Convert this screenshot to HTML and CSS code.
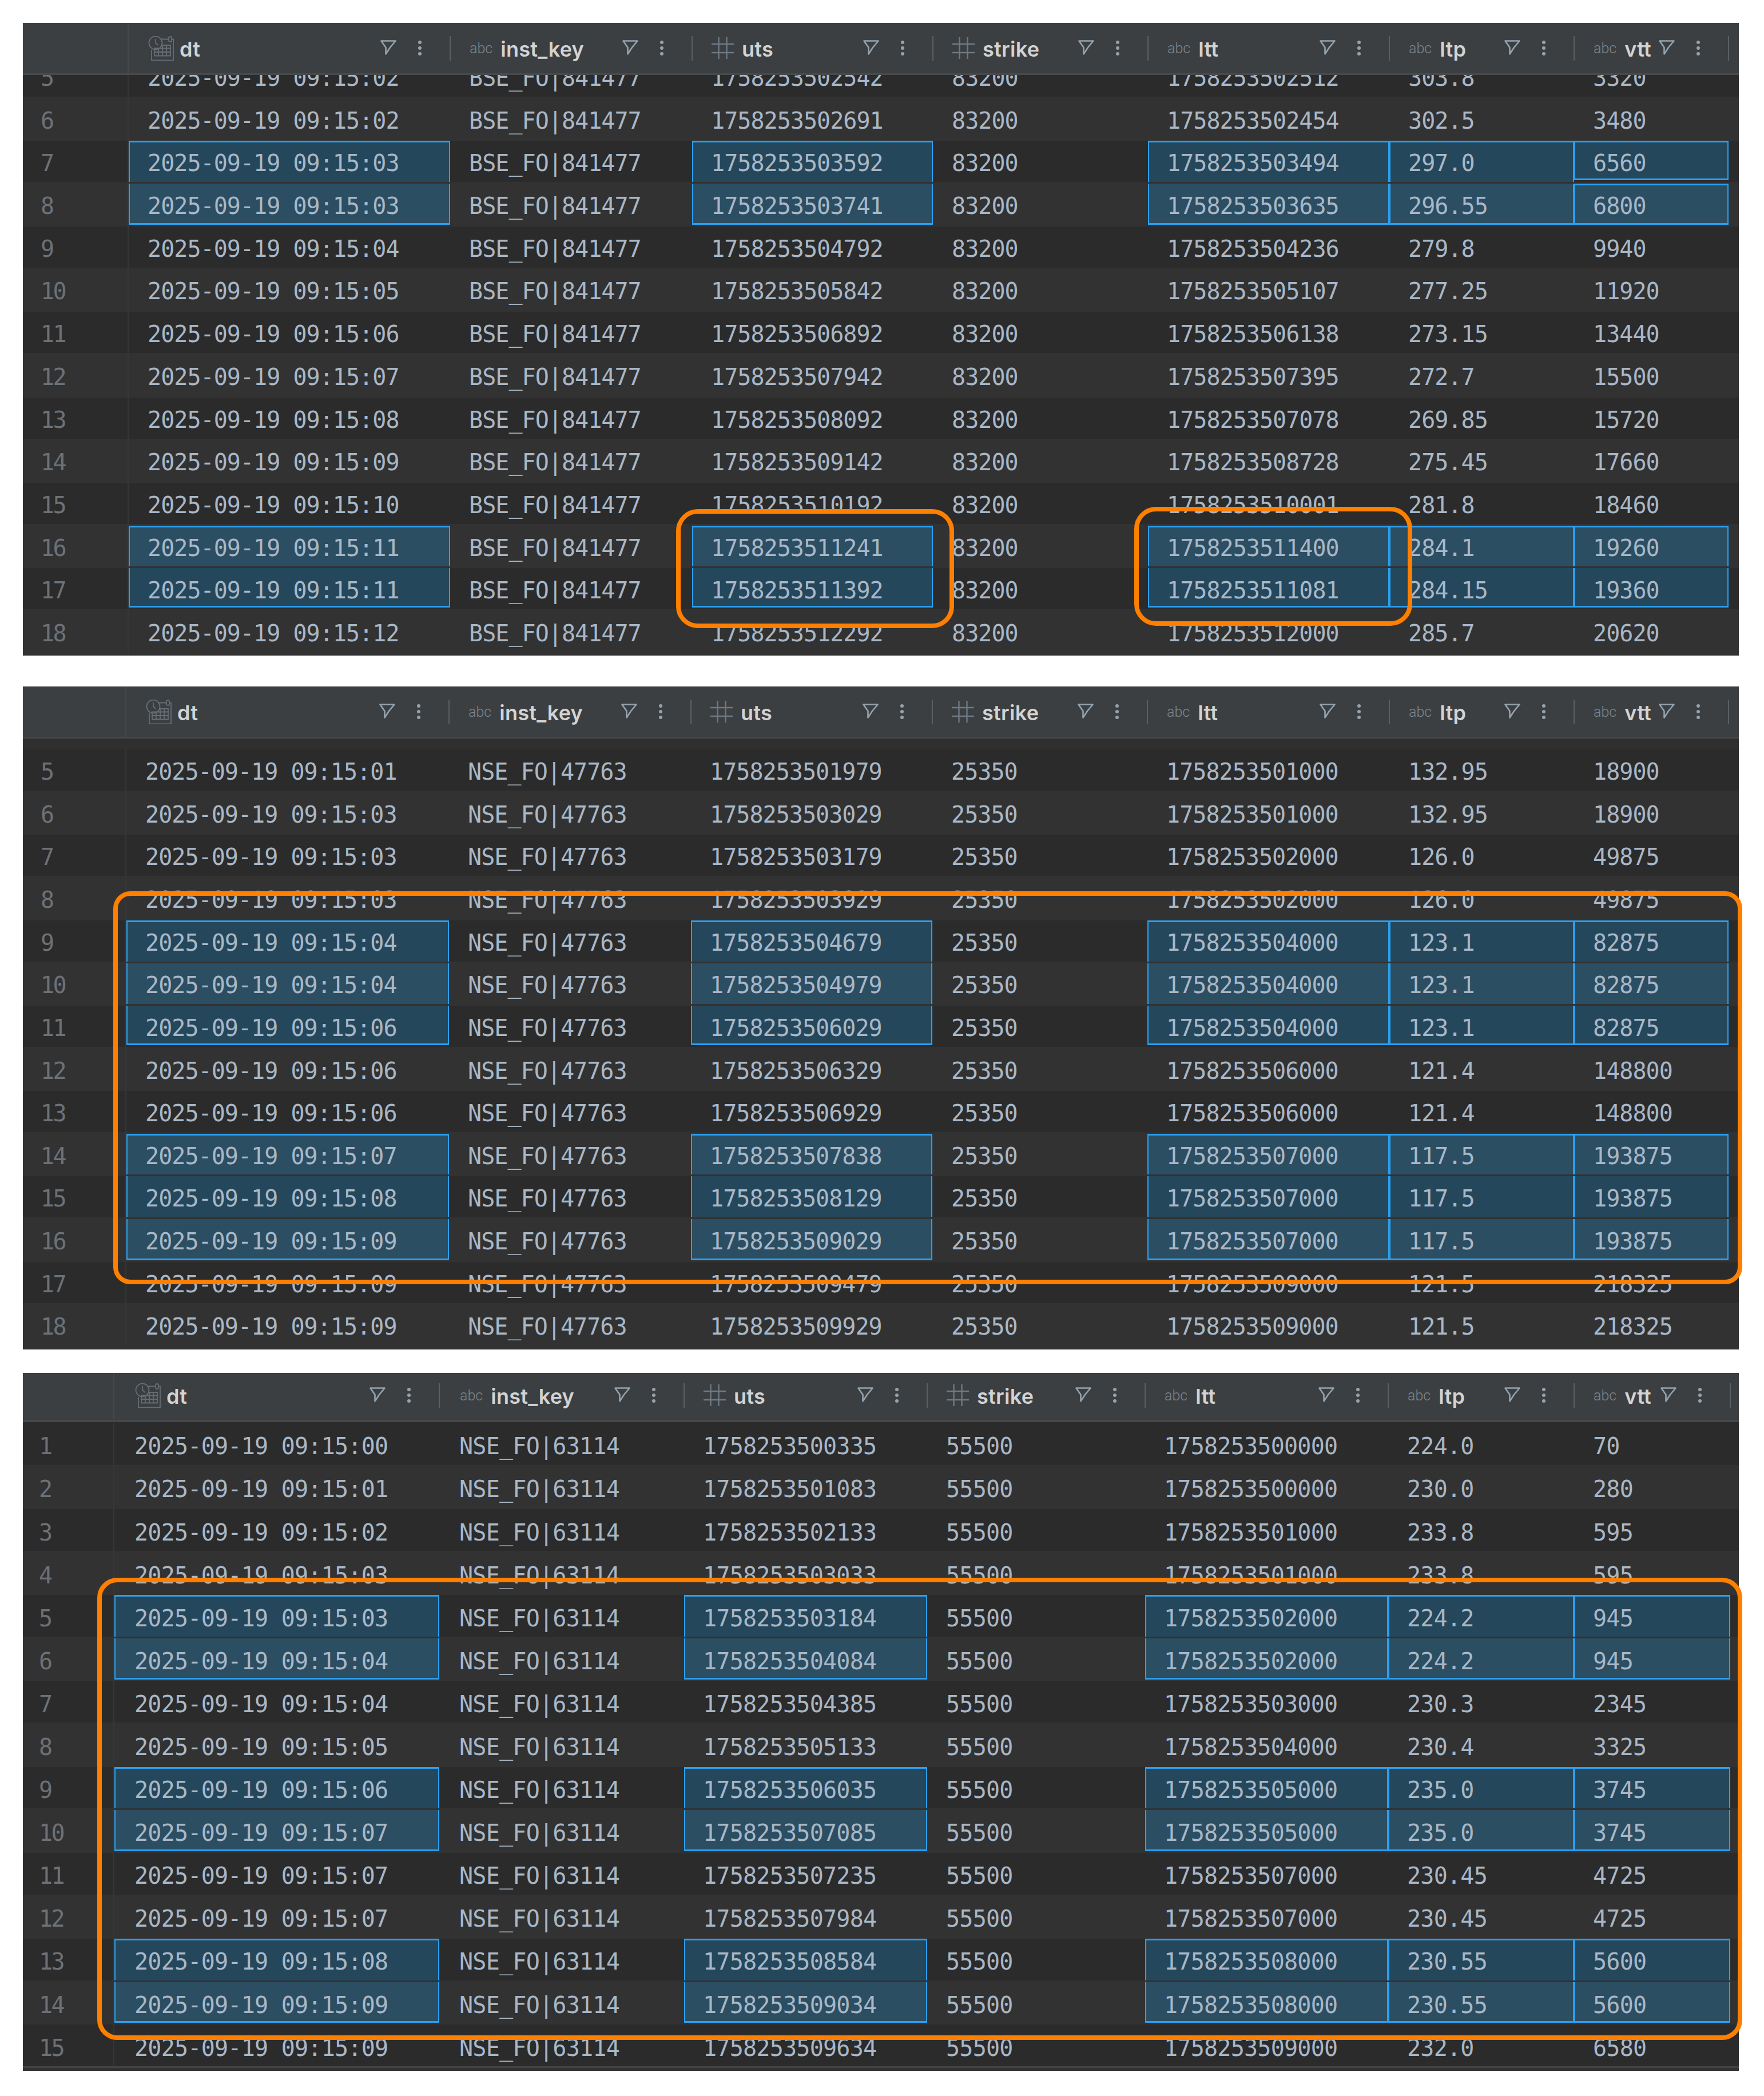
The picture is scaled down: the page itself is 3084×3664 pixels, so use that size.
FILE: index.html
```html
<!DOCTYPE html>
<html lang="en">
<head>
<meta charset="utf-8">
<title>Tick data</title>
<link rel="stylesheet" href="styles.css">
</head>
<body>
<svg class="defs" width="0" height="0" aria-hidden="true">
  <symbol id="i-cal" viewBox="0 0 45 43">
    <path class="st" d="M22 5.500h14M41 5.500h3v37H6V24"/>
    <rect class="st" x="36" y="1" width="5" height="9" rx="2.500"/>
    <path class="st" d="M11 21.500h28v13H11zM11 28h28M18 22v12M25 16v18M32 16v18M25 16h14v6"/>
    <circle class="st" cx="13" cy="12" r="11.500"/>
    <path class="st" d="M13 5v7l4.500 4"/>
  </symbol>
  <symbol id="i-hash" viewBox="0 0 39 38">
    <path class="st hs" d="M12.500 0v38M26.500 0v38M0 12h39M0 27h39"/>
  </symbol>
  <symbol id="i-filter" viewBox="0 0 28 26">
    <path class="fl" d="M1.500 1.500h25L17 13l-7.500 11.500V13z"/>
  </symbol>
  <symbol id="i-kebab" viewBox="0 0 6 26">
    <circle cx="3" cy="3" r="3"/><circle cx="3" cy="13" r="3"/><circle cx="3" cy="23" r="3"/>
  </symbol>
</svg>

<main class="page">

<section class="panel p1">
  <div class="table">
    <header class="head">
      <div class="hnum"></div>
      <div class="h"><svg class="ic cal"><use href="#i-cal"/></svg><span class="lb">dt</span><svg class="fi"><use href="#i-filter"/></svg><svg class="ke"><use href="#i-kebab"/></svg></div>
      <div class="h"><span class="abc">abc</span><span class="lb">inst_key</span><svg class="fi"><use href="#i-filter"/></svg><svg class="ke"><use href="#i-kebab"/></svg></div>
      <div class="h"><svg class="ic hash"><use href="#i-hash"/></svg><span class="lb">uts</span><svg class="fi"><use href="#i-filter"/></svg><svg class="ke"><use href="#i-kebab"/></svg></div>
      <div class="h"><svg class="ic hash"><use href="#i-hash"/></svg><span class="lb">strike</span><svg class="fi"><use href="#i-filter"/></svg><svg class="ke"><use href="#i-kebab"/></svg></div>
      <div class="h"><span class="abc">abc</span><span class="lb">ltt</span><svg class="fi"><use href="#i-filter"/></svg><svg class="ke"><use href="#i-kebab"/></svg></div>
      <div class="h"><span class="abc">abc</span><span class="lb">ltp</span><svg class="fi"><use href="#i-filter"/></svg><svg class="ke"><use href="#i-kebab"/></svg></div>
      <div class="h"><span class="abc">abc</span><span class="lb">vtt</span><svg class="fi"><use href="#i-filter"/></svg><svg class="ke"><use href="#i-kebab"/></svg></div>
    </header>
    <div class="rows">
      <div class="row dark"><div class="num">5</div><div>2025-09-19 09:15:02</div><div>BSE_FO|841477</div><div>1758253502542</div><div>83200</div><div>1758253502512</div><div>303.8</div><div>3320</div></div>
      <div class="row light"><div class="num">6</div><div>2025-09-19 09:15:02</div><div>BSE_FO|841477</div><div>1758253502691</div><div>83200</div><div>1758253502454</div><div>302.5</div><div>3480</div></div>
      <div class="row dark"><div class="num">7</div><div class="sel top">2025-09-19 09:15:03</div><div>BSE_FO|841477</div><div class="sel top">1758253503592</div><div>83200</div><div class="sel top">1758253503494</div><div class="sel top">297.0</div><div class="sel top bot">6560</div></div>
      <div class="row light"><div class="num">8</div><div class="sel bot">2025-09-19 09:15:03</div><div>BSE_FO|841477</div><div class="sel bot">1758253503741</div><div>83200</div><div class="sel bot">1758253503635</div><div class="sel bot">296.55</div><div class="sel top bot">6800</div></div>
      <div class="row dark"><div class="num">9</div><div>2025-09-19 09:15:04</div><div>BSE_FO|841477</div><div>1758253504792</div><div>83200</div><div>1758253504236</div><div>279.8</div><div>9940</div></div>
      <div class="row light"><div class="num">10</div><div>2025-09-19 09:15:05</div><div>BSE_FO|841477</div><div>1758253505842</div><div>83200</div><div>1758253505107</div><div>277.25</div><div>11920</div></div>
      <div class="row dark"><div class="num">11</div><div>2025-09-19 09:15:06</div><div>BSE_FO|841477</div><div>1758253506892</div><div>83200</div><div>1758253506138</div><div>273.15</div><div>13440</div></div>
      <div class="row light"><div class="num">12</div><div>2025-09-19 09:15:07</div><div>BSE_FO|841477</div><div>1758253507942</div><div>83200</div><div>1758253507395</div><div>272.7</div><div>15500</div></div>
      <div class="row dark"><div class="num">13</div><div>2025-09-19 09:15:08</div><div>BSE_FO|841477</div><div>1758253508092</div><div>83200</div><div>1758253507078</div><div>269.85</div><div>15720</div></div>
      <div class="row light"><div class="num">14</div><div>2025-09-19 09:15:09</div><div>BSE_FO|841477</div><div>1758253509142</div><div>83200</div><div>1758253508728</div><div>275.45</div><div>17660</div></div>
      <div class="row dark"><div class="num">15</div><div>2025-09-19 09:15:10</div><div>BSE_FO|841477</div><div>1758253510192</div><div>83200</div><div>1758253510001</div><div>281.8</div><div>18460</div></div>
      <div class="row light"><div class="num">16</div><div class="sel top">2025-09-19 09:15:11</div><div>BSE_FO|841477</div><div class="sel top">1758253511241</div><div>83200</div><div class="sel top">1758253511400</div><div class="sel top">284.1</div><div class="sel top">19260</div></div>
      <div class="row dark"><div class="num">17</div><div class="sel bot">2025-09-19 09:15:11</div><div>BSE_FO|841477</div><div class="sel bot">1758253511392</div><div>83200</div><div class="sel bot">1758253511081</div><div class="sel bot">284.15</div><div class="sel bot">19360</div></div>
      <div class="row light"><div class="num">18</div><div>2025-09-19 09:15:12</div><div>BSE_FO|841477</div><div>1758253512292</div><div>83200</div><div>1758253512000</div><div>285.7</div><div>20620</div></div>
    </div>
  </div>
  <div class="mark m1a"></div>
  <div class="mark m1b"></div>
</section>

<section class="panel p2">
  <div class="table">
    <header class="head">
      <div class="hnum"></div>
      <div class="h"><svg class="ic cal"><use href="#i-cal"/></svg><span class="lb">dt</span><svg class="fi"><use href="#i-filter"/></svg><svg class="ke"><use href="#i-kebab"/></svg></div>
      <div class="h"><span class="abc">abc</span><span class="lb">inst_key</span><svg class="fi"><use href="#i-filter"/></svg><svg class="ke"><use href="#i-kebab"/></svg></div>
      <div class="h"><svg class="ic hash"><use href="#i-hash"/></svg><span class="lb">uts</span><svg class="fi"><use href="#i-filter"/></svg><svg class="ke"><use href="#i-kebab"/></svg></div>
      <div class="h"><svg class="ic hash"><use href="#i-hash"/></svg><span class="lb">strike</span><svg class="fi"><use href="#i-filter"/></svg><svg class="ke"><use href="#i-kebab"/></svg></div>
      <div class="h"><span class="abc">abc</span><span class="lb">ltt</span><svg class="fi"><use href="#i-filter"/></svg><svg class="ke"><use href="#i-kebab"/></svg></div>
      <div class="h"><span class="abc">abc</span><span class="lb">ltp</span><svg class="fi"><use href="#i-filter"/></svg><svg class="ke"><use href="#i-kebab"/></svg></div>
      <div class="h"><span class="abc">abc</span><span class="lb">vtt</span><svg class="fi"><use href="#i-filter"/></svg><svg class="ke"><use href="#i-kebab"/></svg></div>
    </header>
    <div class="rows">
      <div class="row gap"></div>
      <div class="row dark"><div class="num">5</div><div>2025-09-19 09:15:01</div><div>NSE_FO|47763</div><div>1758253501979</div><div>25350</div><div>1758253501000</div><div>132.95</div><div>18900</div></div>
      <div class="row light"><div class="num">6</div><div>2025-09-19 09:15:03</div><div>NSE_FO|47763</div><div>1758253503029</div><div>25350</div><div>1758253501000</div><div>132.95</div><div>18900</div></div>
      <div class="row dark"><div class="num">7</div><div>2025-09-19 09:15:03</div><div>NSE_FO|47763</div><div>1758253503179</div><div>25350</div><div>1758253502000</div><div>126.0</div><div>49875</div></div>
      <div class="row light"><div class="num">8</div><div>2025-09-19 09:15:03</div><div>NSE_FO|47763</div><div>1758253503929</div><div>25350</div><div>1758253502000</div><div>126.0</div><div>49875</div></div>
      <div class="row dark"><div class="num">9</div><div class="sel top">2025-09-19 09:15:04</div><div>NSE_FO|47763</div><div class="sel top">1758253504679</div><div>25350</div><div class="sel top">1758253504000</div><div class="sel top">123.1</div><div class="sel top">82875</div></div>
      <div class="row light"><div class="num">10</div><div class="sel">2025-09-19 09:15:04</div><div>NSE_FO|47763</div><div class="sel">1758253504979</div><div>25350</div><div class="sel">1758253504000</div><div class="sel">123.1</div><div class="sel">82875</div></div>
      <div class="row dark"><div class="num">11</div><div class="sel bot">2025-09-19 09:15:06</div><div>NSE_FO|47763</div><div class="sel bot">1758253506029</div><div>25350</div><div class="sel bot">1758253504000</div><div class="sel bot">123.1</div><div class="sel bot">82875</div></div>
      <div class="row light"><div class="num">12</div><div>2025-09-19 09:15:06</div><div>NSE_FO|47763</div><div>1758253506329</div><div>25350</div><div>1758253506000</div><div>121.4</div><div>148800</div></div>
      <div class="row dark"><div class="num">13</div><div>2025-09-19 09:15:06</div><div>NSE_FO|47763</div><div>1758253506929</div><div>25350</div><div>1758253506000</div><div>121.4</div><div>148800</div></div>
      <div class="row light"><div class="num">14</div><div class="sel top">2025-09-19 09:15:07</div><div>NSE_FO|47763</div><div class="sel top">1758253507838</div><div>25350</div><div class="sel top">1758253507000</div><div class="sel top">117.5</div><div class="sel top">193875</div></div>
      <div class="row dark"><div class="num">15</div><div class="sel">2025-09-19 09:15:08</div><div>NSE_FO|47763</div><div class="sel">1758253508129</div><div>25350</div><div class="sel">1758253507000</div><div class="sel">117.5</div><div class="sel">193875</div></div>
      <div class="row light"><div class="num">16</div><div class="sel bot">2025-09-19 09:15:09</div><div>NSE_FO|47763</div><div class="sel bot">1758253509029</div><div>25350</div><div class="sel bot">1758253507000</div><div class="sel bot">117.5</div><div class="sel bot">193875</div></div>
      <div class="row dark"><div class="num">17</div><div>2025-09-19 09:15:09</div><div>NSE_FO|47763</div><div>1758253509479</div><div>25350</div><div>1758253509000</div><div>121.5</div><div>218325</div></div>
      <div class="row light"><div class="num">18</div><div>2025-09-19 09:15:09</div><div>NSE_FO|47763</div><div>1758253509929</div><div>25350</div><div>1758253509000</div><div>121.5</div><div>218325</div></div>
    </div>
  </div>
  <div class="mark m2"></div>
</section>

<section class="panel p3">
  <div class="table">
    <header class="head">
      <div class="hnum"></div>
      <div class="h"><svg class="ic cal"><use href="#i-cal"/></svg><span class="lb">dt</span><svg class="fi"><use href="#i-filter"/></svg><svg class="ke"><use href="#i-kebab"/></svg></div>
      <div class="h"><span class="abc">abc</span><span class="lb">inst_key</span><svg class="fi"><use href="#i-filter"/></svg><svg class="ke"><use href="#i-kebab"/></svg></div>
      <div class="h"><svg class="ic hash"><use href="#i-hash"/></svg><span class="lb">uts</span><svg class="fi"><use href="#i-filter"/></svg><svg class="ke"><use href="#i-kebab"/></svg></div>
      <div class="h"><svg class="ic hash"><use href="#i-hash"/></svg><span class="lb">strike</span><svg class="fi"><use href="#i-filter"/></svg><svg class="ke"><use href="#i-kebab"/></svg></div>
      <div class="h"><span class="abc">abc</span><span class="lb">ltt</span><svg class="fi"><use href="#i-filter"/></svg><svg class="ke"><use href="#i-kebab"/></svg></div>
      <div class="h"><span class="abc">abc</span><span class="lb">ltp</span><svg class="fi"><use href="#i-filter"/></svg><svg class="ke"><use href="#i-kebab"/></svg></div>
      <div class="h"><span class="abc">abc</span><span class="lb">vtt</span><svg class="fi"><use href="#i-filter"/></svg><svg class="ke"><use href="#i-kebab"/></svg></div>
    </header>
    <div class="rows">
      <div class="row dark"><div class="num">1</div><div>2025-09-19 09:15:00</div><div>NSE_FO|63114</div><div>1758253500335</div><div>55500</div><div>1758253500000</div><div>224.0</div><div>70</div></div>
      <div class="row light"><div class="num">2</div><div>2025-09-19 09:15:01</div><div>NSE_FO|63114</div><div>1758253501083</div><div>55500</div><div>1758253500000</div><div>230.0</div><div>280</div></div>
      <div class="row dark"><div class="num">3</div><div>2025-09-19 09:15:02</div><div>NSE_FO|63114</div><div>1758253502133</div><div>55500</div><div>1758253501000</div><div>233.8</div><div>595</div></div>
      <div class="row light"><div class="num">4</div><div>2025-09-19 09:15:03</div><div>NSE_FO|63114</div><div>1758253503033</div><div>55500</div><div>1758253501000</div><div>233.8</div><div>595</div></div>
      <div class="row dark"><div class="num">5</div><div class="sel top">2025-09-19 09:15:03</div><div>NSE_FO|63114</div><div class="sel top">1758253503184</div><div>55500</div><div class="sel top">1758253502000</div><div class="sel top">224.2</div><div class="sel top">945</div></div>
      <div class="row light"><div class="num">6</div><div class="sel bot">2025-09-19 09:15:04</div><div>NSE_FO|63114</div><div class="sel bot">1758253504084</div><div>55500</div><div class="sel bot">1758253502000</div><div class="sel bot">224.2</div><div class="sel bot">945</div></div>
      <div class="row dark"><div class="num">7</div><div>2025-09-19 09:15:04</div><div>NSE_FO|63114</div><div>1758253504385</div><div>55500</div><div>1758253503000</div><div>230.3</div><div>2345</div></div>
      <div class="row light"><div class="num">8</div><div>2025-09-19 09:15:05</div><div>NSE_FO|63114</div><div>1758253505133</div><div>55500</div><div>1758253504000</div><div>230.4</div><div>3325</div></div>
      <div class="row dark"><div class="num">9</div><div class="sel top">2025-09-19 09:15:06</div><div>NSE_FO|63114</div><div class="sel top">1758253506035</div><div>55500</div><div class="sel top">1758253505000</div><div class="sel top">235.0</div><div class="sel top">3745</div></div>
      <div class="row light"><div class="num">10</div><div class="sel bot">2025-09-19 09:15:07</div><div>NSE_FO|63114</div><div class="sel bot">1758253507085</div><div>55500</div><div class="sel bot">1758253505000</div><div class="sel bot">235.0</div><div class="sel bot">3745</div></div>
      <div class="row dark"><div class="num">11</div><div>2025-09-19 09:15:07</div><div>NSE_FO|63114</div><div>1758253507235</div><div>55500</div><div>1758253507000</div><div>230.45</div><div>4725</div></div>
      <div class="row light"><div class="num">12</div><div>2025-09-19 09:15:07</div><div>NSE_FO|63114</div><div>1758253507984</div><div>55500</div><div>1758253507000</div><div>230.45</div><div>4725</div></div>
      <div class="row dark"><div class="num">13</div><div class="sel top">2025-09-19 09:15:08</div><div>NSE_FO|63114</div><div class="sel top">1758253508584</div><div>55500</div><div class="sel top">1758253508000</div><div class="sel top">230.55</div><div class="sel top">5600</div></div>
      <div class="row light"><div class="num">14</div><div class="sel bot">2025-09-19 09:15:09</div><div>NSE_FO|63114</div><div class="sel bot">1758253509034</div><div>55500</div><div class="sel bot">1758253508000</div><div class="sel bot">230.55</div><div class="sel bot">5600</div></div>
      <div class="row dark"><div class="num">15</div><div>2025-09-19 09:15:09</div><div>NSE_FO|63114</div><div>1758253509634</div><div>55500</div><div>1758253509000</div><div>232.0</div><div>6580</div></div>
    </div>
    <div class="foot"></div>
  </div>
  <div class="mark m3"></div>
</section>

</main>
</body>
</html>
```
FILE: styles.css
```css
* { box-sizing: border-box; }

html, body { margin: 0; background: #fff; }

.defs { position: absolute; }

.st { fill: none; stroke: #666d75; stroke-width: 1.800; }
.hs { stroke: #6d7a85; stroke-width: 2.400; }
.fl { fill: none; stroke: #93a3b0; stroke-width: 2.600; stroke-linejoin: round; }

.page {
  width: 3084px;
  padding: 40px 44px 44px 40px;
  display: flex;
  flex-direction: column;
}

.panel { position: relative; width: 3000px; flex: none; }

.p1 {
  --cols: 185px 562px 423px 421px 376px 422px 323px 270px 18px;
  --dark: 72px;
  --light: 77.400px;
  height: 1106px;
  margin-bottom: 54px;
}
.p2 {
  --cols: 181px 564px 423px 422px 376px 423px 323px 270px 18px;
  --dark: 72px;
  --light: 77.300px;
  height: 1159px;
  margin-bottom: 41px;
}
.p3 {
  --cols: 160px 568px 428px 425px 381px 425px 325px 273px 15px;
  --dark: 72.700px;
  --light: 77.500px;
  height: 1220px;
}

.table {
  height: 100%;
  overflow: hidden;
  background: #323232;
  display: flex;
  flex-direction: column;
}

/* header */
.head {
  position: relative;
  z-index: 2;
  flex: none;
  height: 91px;
  display: grid;
  grid-template-columns: var(--cols);
  background: #3c3f41;
  border-bottom: 3px solid #47494b;
}
.p3 .head { height: 86px; padding-bottom: 5px; }

.hnum { border-right: 2px solid #46484a; margin-bottom: -3px; }

.h {
  display: flex;
  align-items: center;
  padding-left: 34px;
  min-width: 0;
}
.p3 .h:nth-child(2), .p3 .h:nth-child(3) { padding-left: 36px; }

.h::after {
  content: "";
  flex: none;
  width: 2px;
  height: 43px;
  margin-right: -1px;
  background: #5c5f61;
}

.ic { flex: none; margin-right: 14px; }
.cal { width: 45px; height: 43px; margin-right: 10px; }
.hash { width: 39px; height: 38px; }

.abc {
  flex: none;
  margin-right: 14px;
  font: 300 25px/1 Roboto, sans-serif;
  color: #7b858e;
}

.lb {
  margin-top: 3px;
  font: 600 36px/1 Inter, "Liberation Sans", sans-serif;
  letter-spacing: 0.300px;
  color: #d3d3d3;
  white-space: nowrap;
}

.fi { flex: none; width: 28px; height: 26px; margin-left: auto; margin-top: -2px; }
.ke { flex: none; width: 6px; height: 26px; margin: 0 49px 0 38px; fill: #98a2aa; }

/* rows */
.rows { flex: none; }
.p1 .rows { margin-top: -34px; }
.p3 .rows { padding-top: 2px; background: #2b2b2b; }

.foot { height: 4px; margin-top: -1px; background: #424344; }

.row {
  display: grid;
  grid-template-columns: var(--cols);
  isolation: isolate;
  font: 40px/1 "DejaVu Sans Mono", "Liberation Mono", monospace;
  letter-spacing: -0.950px;
  color: #a9b7c6;
  white-space: nowrap;
}
.p3 .row { letter-spacing: -0.750px; }
.dark { height: var(--dark); background: #2b2b2b; }
.light { height: var(--light); background: #323232; }
.gap { height: 19px; background: #2f2f2f; }

.row > div {
  position: relative;
  display: flex;
  align-items: center;
  padding: 6px 0 0 33px;
}
.p3 .row > div { padding-top: 8px; }
.p3 .row > div:nth-child(2), .p3 .row > div:nth-child(3) { padding-left: 35px; }

.row > .num {
  padding-left: 31px;
  letter-spacing: -2.500px;
  color: #6d7176;
  border-right: 2px solid #363636;
}
.p3 .row > .num { padding-left: 28px; letter-spacing: -2.500px; }

/* selected cells */
.sel::before {
  content: "";
  position: absolute;
  z-index: -1;
  inset: 0;
  background: #24475c;
  border-left: 2px solid #2aa0f2;
  border-right: 2px solid #2aa0f2;
}
.light .sel::before { inset: 3px 0; background: #2b4e62; }
.sel.top::before { border-top: 3px solid #2aa0f2; }
.sel.bot::before { border-bottom: 3px solid #2aa0f2; }
.dark .sel.bot::before { bottom: 3px; }

/* orange annotations */
.mark {
  position: absolute;
  z-index: 3;
  border: 8px solid #ff7f00;
}
.m1a { left: 1142px; top: 850px; width: 486px; height: 208px; border-radius: 38px; }
.m1b { left: 1943px; top: 846px; width: 486px; height: 208px; border-radius: 38px; }
.m2 { left: 158px; top: 358px; width: 2848px; height: 687px; border-radius: 30px; }
.m3 { left: 130px; top: 358px; width: 2876px; height: 808px; border-radius: 35px; }
```
